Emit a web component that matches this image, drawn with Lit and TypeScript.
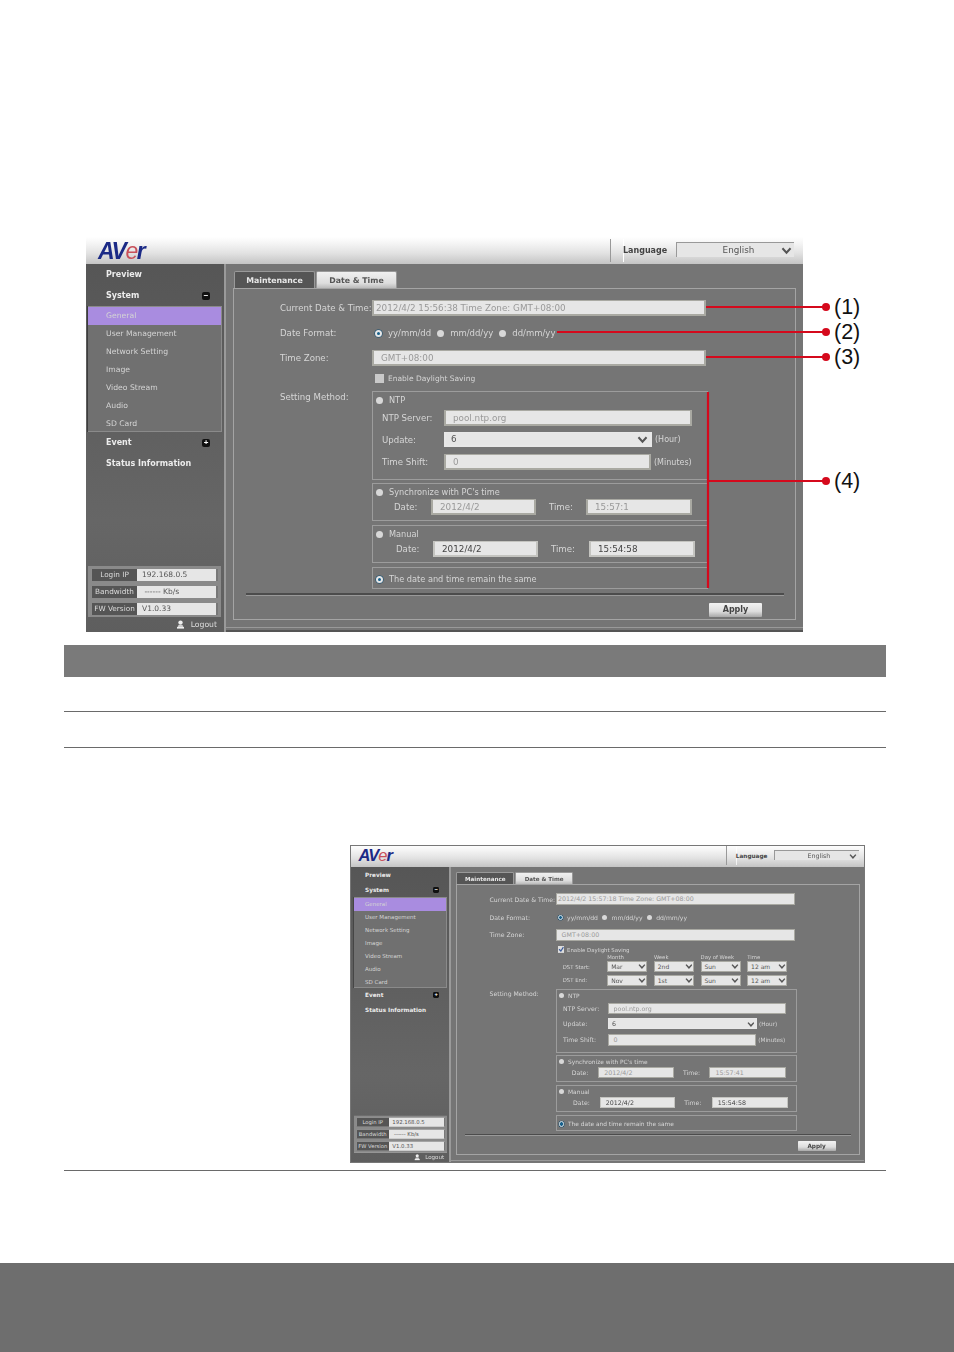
import { LitElement, html, css, svg } from "lit";
import { customElement, property } from "lit/decorators.js";

const chevron = html`<svg class="chev" viewBox="0 0 12 10"><path d="M1.5 2.5 6 7.5l4.5-5" fill="none" stroke="#555" stroke-width="2.2"/></svg>`;

@customElement("ui-shot")
class UiShot extends LitElement {
  @property({ type: Boolean, reflect: true }) dst = false;
  @property() now = "15:56:38";
  @property() sync = "15:57:1";

  static styles = css`
    :host { display: block; width: 717px; font-family: "DejaVu Sans", Verdana, sans-serif; font-size: 8.6px; color: #d6d6d6; filter: blur(0.3px); }
    .head { height: 27px; display: flex; align-items: center; background: linear-gradient(#ffffff 0, #f4f4f4 25%, #e2e2e2 60%, #c4c4c4 100%); }
    :host([dst]) .head { height: 30px; }
    .logo { margin-left: 12px; width: 498px; font: italic bold 23px/24px "Liberation Sans", Arial, sans-serif; color: #1b2a86; letter-spacing: -1.4px; }
    .logo span { color: #c8505a; font-weight: 400; }
    .sep { align-self: stretch; margin: 2px 0 2px 14px; border-left: 1px solid #999; box-shadow: 1px 0 0 #fff; width: 12px; }
    .lang { font-weight: 700; color: #444; font-size: 8px; width: 53px; }
    .langsel { width: 118px; height: 15px; box-sizing: border-box; border: 1px solid #999; border-width: 1px 0 0 1px; background: #e6e6e6; color: #555; display: flex; align-items: center; justify-content: center; position: relative; padding-left: 6px; font-size: 8.8px; margin-top: -2px; }
    .chev { width: 11px; height: 9px; }
    .langsel .chev { position: absolute; right: 2px; top: 3px; }
    .body { display: grid; grid-template-columns: 138px 577px; column-gap: 2px; background: #9a9a9a; }
    .side { height: 368px; background: linear-gradient(#565656, #666 70%, #5e5e5e); display: flex; flex-direction: column; box-sizing: border-box; }
    :host([dst]) .side { height: 413px; padding: 1px 0 0 3px; }
    .h { height: 21px; display: flex; align-items: center; justify-content: space-between; padding: 0 14px 0 20px; font: 700 8px "DejaVu Sans", sans-serif; color: #ececec; }
    :host([dst]) .h { padding-left: 18px; }
    .box { width: 8px; height: 8px; border-radius: 2px; background: #111; color: #fff; display: flex; align-items: center; justify-content: center; font: 700 8px/8px "Liberation Sans", sans-serif; }
    .sub { margin: 0 2px; height: 126px; background: #707070; border: 1px solid #8a8a8a; border-width: 1px 1px 1px 0; box-shadow: -1px 0 0 #3d3d3d; box-sizing: border-box; }
    :host([dst]) .sub { margin-left: 2px; margin-right: 3px; }
    .sub div { height: 18px; line-height: 18px; padding-left: 18px; font-size: 7.7px; color: #d4d4d4; }
    :host([dst]) .sub div { padding-left: 16px; }
    .sub .on { background: #a98ce0; }
    .spacer { flex: 1; }
    .info { margin: 0 3px 0 2px; height: 51px; background: #8a8a8a; padding: 3px 3px; box-sizing: border-box; display: flex; flex-direction: column; gap: 5px; transform: translateY(1px); }
    .info div { height: 12px; display: grid; grid-template-columns: 46px 1fr; background: #e6e6e6; border-right: 2px solid #777; box-sizing: border-box; color: #555; font-size: 7.5px; line-height: 12px; }
    .info b { font-weight: 400; background: #555; color: #ddd; text-align: center; border: 1px solid #8c8c8c; border-width: 0 0 0 1px; white-space: nowrap; font-size: 7.3px; }
    .info span { padding-left: 5px; white-space: pre; }
    .logout { height: 16px; display: flex; align-items: center; justify-content: flex-end; padding-right: 7px; gap: 6px; font-size: 7.7px; color: #ddd; }
    .logout svg { width: 9px; height: 9px; }
    .main { background: #757575; padding: 7px 7px 0; box-sizing: border-box; display: flex; flex-direction: column; align-items: flex-start; border-bottom: 2px solid #555; }
    .tabs { display: flex; gap: 1px; margin-left: 1px; height: 17px; font: 700 7.8px/17px "DejaVu Sans", sans-serif; text-align: center; }
    .tab { width: 81px; background: #555; color: #e8e8e8; border: 1px solid #999; border-bottom: 0; box-sizing: border-box; border-radius: 2px 2px 0 0; }
    .tab.act { background: linear-gradient(#f0f0f0, #ddd 70%, #bbb); color: #555; }
    .panel { width: 563px; flex: 1; box-sizing: border-box; border: 1px solid #a4a4a4; padding: 11px 11px 0 46px; margin-bottom: 7px; }
    :host([dst]) .panel { padding-top: 12px; }
    .baseline { width: 577px; margin: 0 -7px 2px; border-top: 1px solid #999; }
    .row { display: grid; grid-template-columns: 92px 1fr; min-height: 16px; margin-bottom: 9px; align-items: center; }
    .row.top { align-items: start; margin-bottom: 0; }
    .row.tight { margin: -4px 0 5px; min-height: 15px; }
    .lab { white-space: nowrap; }
    .top > .lab { padding-top: 1px; }
    .inp { height: 16px; box-sizing: border-box; background: #e6e6e6; border: 2px solid #a9a9a2; border-width: 1px 2px 2px 2px; color: #999; padding-left: 5px; line-height: 14px; white-space: pre; position: relative; font-size: 8.8px; }
    .inp.live { color: #444; border-color: #c4c4c0; }
    .inp.w332 { width: 334px; padding-left: 2px; }
    .inp.p6 { padding-left: 7px; }
    .radios { display: flex; align-items: center; padding-left: 3px; font-size: 8.5px; }
    .radios span { margin: 0 6px 0 6px; }
    .r { width: 7px; height: 7px; border-radius: 50%; background: #d8d8d8; box-sizing: border-box; flex: none; }
    .r.on { background: #16608c; border: 2px solid #e6e6e6; box-shadow: 0 0 0 .5px #0d4a70; }
    .chk { display: flex; align-items: center; gap: 4px; padding-left: 3px; font-size: 7.5px; }
    .cb { width: 9px; height: 9px; background: #c9c9c9; flex: none; }
    .cb svg { display: block; width: 9px; height: 9px; }
    .dgrid { display: grid; grid-template-columns: 62px 65px 65px 65px 65px; grid-template-rows: 9px 18px 20px; align-items: center; font-size: 7.4px; margin: -7px 0 2px 102px; }
    .dgrid .t { height: 9px; line-height: 9px; }
    .dgrid .s { width: 56px; height: 15px; background: #e6e6e6; border: 2px solid #a9a9a2; border-width: 1px 2px 2px; box-sizing: border-box; color: #555; display: flex; align-items: center; justify-content: space-between; padding: 0 1px 0 4px; font-size: 8.4px; }
    .group { box-sizing: border-box; border: 1px solid #9c9c9c; width: 336px; margin-bottom: 3px; padding: 4px 3px 0 3px; position: relative; }
    .rad { display: flex; align-items: center; gap: 6px; height: 8px; font-size: 8.2px; white-space: nowrap; }
    .g1 { height: 89px; }
    .g2 { height: 38px; margin-bottom: 4px; }
    .g3 { height: 38px; margin-bottom: 4px; }
    .g4 { height: 22px; padding-top: 7px; margin-bottom: 0; }
    .fld { display: grid; align-items: center; margin-left: 6px; font-size: 8.6px; }
    .fld .x { padding-left: 3px; font-size: 8px; white-space: nowrap; }
    .f1 { margin-top: 6px; grid-template-columns: 62px 248px; }
    .f2 { margin-top: 6px; grid-template-columns: 62px 208px 1fr; }
    .f3 { margin-top: 7px; grid-template-columns: 62px 207px 1fr; }
    .sel { height: 15px; display: flex; justify-content: space-between; align-items: center; border-color: #e8e8e8; color: #555; padding: 0 2px 0 5px; }
    .dates { display: grid; align-items: center; margin-top: 3px; }
    .dates .l { white-space: nowrap; }
    .d2 { grid-template-columns: 55px 105px 50px 106px; }
    .d2 .l:first-child { padding-left: 18px; }
    .d3 { grid-template-columns: 57px 105px 51px 106px; }
    .d3 .l:first-child { padding-left: 20px; }
    .dates .rl { padding-left: 13px; }
    .rule { width: 538px; margin: 4px 0 0 -126px; border-top: 2px solid #4c4c4c; border-bottom: 1px solid #999; height: 0; }
    .foot { display: flex; justify-content: flex-end; width: 516px; margin-left: -126px; padding-top: 7px; }
    .btn { width: 53px; height: 14px; background: linear-gradient(#f2f2f2, #ddd 60%, #a8a8a8); color: #444; font: 700 8px/14px "DejaVu Sans", sans-serif; text-align: center; border-radius: 1px; }
  `;

  render() {
    const dst = this.dst;
    const dsel = (v: string) => html`<div class="s">${v}${chevron}</div>`;
    return html`
      <div class="head">
        <div class="logo">AV<span>e</span>r</div>
        <div class="sep"></div>
        <div class="lang">Language</div>
        <div class="langsel">English${chevron}</div>
      </div>
      <div class="body">
        <aside class="side">
          <div class="h">Preview</div>
          <div class="h">System<i class="box">−</i></div>
          <div class="sub">
            <div class="on">General</div><div>User Management</div><div>Network Setting</div><div>Image</div><div>Video Stream</div><div>Audio</div><div>SD Card</div>
          </div>
          <div class="h">Event<i class="box">+</i></div>
          <div class="h">Status Information</div>
          <div class="spacer"></div>
          <div class="info">
            <div><b>Login IP</b><span>192.168.0.5</span></div>
            <div><b>Bandwidth</b><span> ------ Kb/s</span></div>
            <div><b>FW Version</b><span>V1.0.33</span></div>
          </div>
          <div class="logout">
            <svg viewBox="0 0 9 9"><circle cx="4.5" cy="2.6" r="2.2" fill="#eee"/><path d="M1 7h7v1.6H1z" fill="#eee"/><path d="M2.5 5h4l1 2h-6z" fill="#ccc"/></svg>
            Logout
          </div>
        </aside>
        <main class="main">
          <div class="tabs"><div class="tab">Maintenance</div><div class="tab act">Date &amp; Time</div></div>
          <div class="panel">
            <div class="row"><div class="lab">Current Date &amp; Time:</div><div class="inp w332">2012/4/2 ${this.now} Time Zone: GMT+08:00</div></div>
            <div class="row"><div class="lab">Date Format:</div>
              <div class="radios"><i class="r on"></i><span>yy/mm/dd</span><i class="r"></i><span>mm/dd/yy</span><i class="r"></i><span>dd/mm/yy</span></div></div>
            <div class="row"><div class="lab">Time Zone:</div><div class="inp w332 p6">GMT+08:00</div></div>
            <div class="row tight"><div></div><div class="chk"><i class="cb">${dst ? html`<svg viewBox="0 0 9 9"><rect width="9" height="9" fill="#ddd"/><path d="M1.5 4.5 4 7l3.5-5.5" fill="none" stroke="#3a5a9a" stroke-width="1.6"/></svg>` : ""}</i>Enable Daylight Saving</div></div>
            ${dst ? html`<div class="dgrid">
              <div class="t"></div><div class="t">Month</div><div class="t">Week</div><div class="t">Day of Week</div><div class="t">Time</div>
              <div>DST Start:</div>${dsel("Mar")}${dsel("2nd")}${dsel("Sun")}${dsel("12 am")}
              <div>DST End:</div>${dsel("Nov")}${dsel("1st")}${dsel("Sun")}${dsel("12 am")}
            </div>` : ""}
            <div class="row top"><div class="lab">Setting Method:</div>
              <div>
                <div class="group g1">
                  <div class="rad"><i class="r"></i>NTP</div>
                  <div class="fld f1"><span>NTP Server:</span><div class="inp p6">pool.ntp.org</div></div>
                  <div class="fld f2"><span>Update:</span><div class="inp sel"><span>6</span>${chevron}</div><span class="x">(Hour)</span></div>
                  <div class="fld f3"><span>Time Shift:</span><div class="inp p6">0</div><span class="x">(Minutes)</span></div>
                </div>
                <div class="group g2">
                  <div class="rad"><i class="r"></i>Synchronize with PC's time</div>
                  <div class="dates d2"><span class="l">Date:</span><div class="inp p6">2012/4/2</div><span class="l rl">Time:</span><div class="inp p6">${this.sync}</div></div>
                </div>
                <div class="group g3">
                  <div class="rad"><i class="r"></i>Manual</div>
                  <div class="dates d3"><span class="l">Date:</span><div class="inp live p6">2012/4/2</div><span class="l rl">Time:</span><div class="inp live p6">15:54:58</div></div>
                </div>
                <div class="group g4"><div class="rad"><i class="r on"></i>The date and time remain the same</div></div>
                <div class="rule"></div>
                <div class="foot"><div class="btn">Apply</div></div>
              </div>
            </div>
          </div>
          <div class="baseline"></div>
        </main>
      </div>
    `;
  }
}

const callout = (y: number, x: number, n: string) => svg`
  <path d="M${x} ${y}H740" stroke="#d5091c" stroke-width="2.2"/>
  <circle cx="740" cy="${y}" r="4" fill="#d5091c"/>
  <text x="748" y="${y + 7}" font-family="Liberation Sans, Arial, sans-serif" font-size="21.5" fill="#111">${n}</text>`;

@customElement("app-root")
class AppRoot extends LitElement {
  static styles = css`
    :host { display: block; width: 954px; height: 1352px; background: #fff; overflow: hidden; }
    .fig { position: relative; width: 717px; margin: 237px 0 0 86px; }
    .marks { position: absolute; left: 0; top: 0; width: 800px; height: 395px; overflow: visible; pointer-events: none; }
    .band { height: 32px; margin: 13px 68px 0 64px; background: #7a7a7a; }
    .line { margin: 0 68px 0 64px; border-bottom: 1px solid #6a6a6a; box-sizing: border-box; }
    .l1 { height: 35px; }
    .l2 { height: 36px; }
    .l3 { height: 423px; padding: 97px 0 0 286px; }
    .small { zoom: 0.718; outline: 1.4px solid #777; outline-offset: -1.4px; }
    .footer { height: 89px; margin-top: 92px; background: #6e6e6e; }
  `;
  render() {
    return html`
      <div class="fig">
        <ui-shot></ui-shot>
        <svg class="marks" viewBox="0 0 800 395">
          ${callout(70, 620, "(1)")}
          ${callout(95, 471, "(2)")}
          ${callout(120, 620, "(3)")}
          ${callout(244, 622, "(4)")}
          <path d="M622 155V351" stroke="#d5091c" stroke-width="2.2"/>
        </svg>
      </div>
      <div class="band"></div>
      <div class="line l1"></div>
      <div class="line l2"></div>
      <div class="line l3"><ui-shot class="small" dst now="15:57:18" sync="15:57:41"></ui-shot></div>
      <div class="footer"></div>
    `;
  }
}
